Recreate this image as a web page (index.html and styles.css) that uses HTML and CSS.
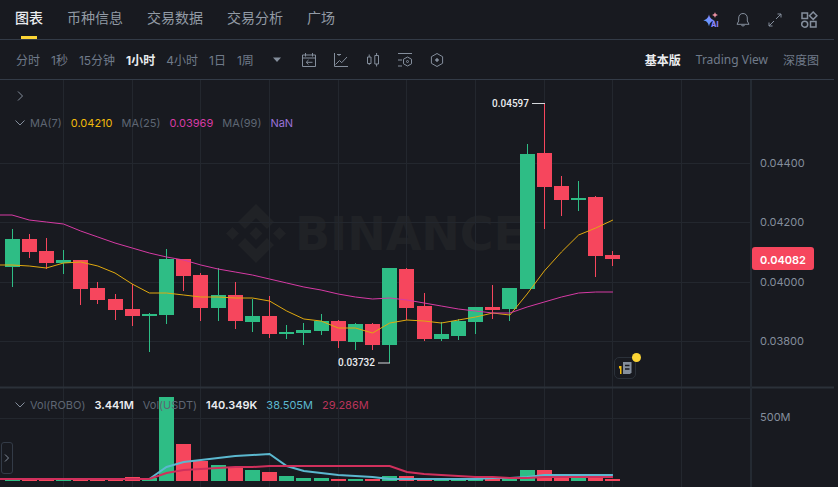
FILE: index.html
```html
<!DOCTYPE html>
<html lang="zh-CN">
<head>
  <meta charset="UTF-8">
  <meta name="viewport" content="width=device-width, initial-scale=1.0">
  <title>ROBO/USDT</title>
  <link rel="stylesheet" href="styles.css">
</head>
<body>
  <header class="tabs-bar">
    <nav class="tabs">
      <a href="#" class="tab active">图表</a>
      <a href="#" class="tab">币种信息</a>
      <a href="#" class="tab">交易数据</a>
      <a href="#" class="tab">交易分析</a>
      <a href="#" class="tab">广场</a>
    </nav>
    <div class="actions">
      <button class="icon-btn" aria-label="AI">
        <svg width="16" height="16" viewBox="0 0 16 16">
          <defs>
            <linearGradient id="spark" x1="0" y1="1" x2="1" y2="0">
              <stop offset="0" stop-color="#4aa8ff"/>
              <stop offset="1" stop-color="#9a7bff"/>
            </linearGradient>
          </defs>
          <path fill="url(#spark)" d="M6 2.500c.9 3.500 2.200 4.800 5.700 5.800C8.200 9.300 6.900 10.600 6 14.200 5.100 10.600 3.800 9.300.3 8.300 3.800 7.300 5.100 6 6 2.500z"/>
          <path fill="#e88fa0" d="M12 0c.5 1.800 1.200 2.500 3 3-1.800.5-2.500 1.200-3 3-.5-1.800-1.200-2.500-3-3 1.800-.5 2.500-1.200 3-3z"/>
          <text class="ai-mark" x="8" y="15">AI</text>
        </svg>
      </button>
      <button class="icon-btn" aria-label="提醒">
        <svg width="16" height="16" viewBox="0 0 16 16" class="line">
          <path d="M8 1.500c-2.700 0-4.300 1.900-4.300 4.500v3L2 12.300h12L12.300 9V6c0-2.600-1.600-4.500-4.300-4.500zM6.300 13c.3 1.300 3.100 1.300 3.400 0"/>
        </svg>
      </button>
      <button class="icon-btn" aria-label="全屏">
        <svg width="16" height="16" viewBox="0 0 16 16" class="line">
          <path d="M10.500 2h3.500v3.500M14 2L9 7M5.500 14H2v-3.500M2 14l5-5"/>
        </svg>
      </button>
      <button class="icon-btn" aria-label="布局">
        <svg width="20" height="18" viewBox="-1 0 20 18" class="line thick">
          <path d="M2 2h5.500v5.500H2zM10.500 10.500H16V16h-5.500zM13.200 1l3.700 3.700-3.700 3.700-3.700-3.700z"/>
          <circle cx="4.700" cy="13.200" r="3"/>
        </svg>
      </button>
    </div>
  </header>

  <div class="toolbar">
    <div class="intervals">
      <button>分时</button>
      <button>1秒</button>
      <button>15分钟</button>
      <button class="active">1小时</button>
      <button>4小时</button>
      <button>1日</button>
      <button>1周</button>
    </div>
    <div class="tools">
      <button class="icon-btn" aria-label="更多周期">
        <svg width="16" height="16" viewBox="0 0 16 16"><path fill="#848e9c" d="M4 5.500h8L8 10z"/></svg>
      </button>
      <button class="icon-btn" aria-label="日期">
        <svg width="16" height="16" viewBox="0 0 16 16" class="line">
          <path d="M1.500 3h13v11.500h-13zM1.500 6h13M4.500 1v3.500M11.500 1v3.500M11.500 10.300h-6M7.500 8l-2.300 2.300 2.300 2.300"/>
        </svg>
      </button>
      <button class="icon-btn" aria-label="走势">
        <svg width="16" height="16" viewBox="0 0 16 16" class="line">
          <path d="M1.500 1v13.500H15M2.500 12.500l4-4 2.200 2.200L14 5M4 2.500h4M6 2.500v1.500"/>
        </svg>
      </button>
      <button class="icon-btn" aria-label="K线样式">
        <svg width="16" height="16" viewBox="0 0 16 16" class="line">
          <path d="M2.500 5h3.500v6.500H2.500zM9.800 3.500h3.700v8.500H9.800zM4.200 2.500V5M4.200 11.500V13M11.600 1v2.500M11.600 12v2.500"/>
        </svg>
      </button>
      <button class="icon-btn" aria-label="指标">
        <svg width="16" height="16" viewBox="0 0 16 16" class="line">
          <path d="M1 1.500h14M1 8h4M1 14h4M10.500 5l4 2.200v4.600l-4 2.200-4-2.200V7.200z"/>
          <circle cx="10.500" cy="9.500" r="1"/>
        </svg>
      </button>
      <button class="icon-btn" aria-label="设置">
        <svg width="16" height="16" viewBox="0 0 16 16" class="line">
          <path d="M8 1.500l5.600 3.200v6.600L8 14.500l-5.600-3.200V4.700z"/>
          <circle cx="8" cy="8" r="1.300" fill="#848e9c"/>
        </svg>
      </button>
    </div>
    <div class="views">
      <button class="active">基本版</button>
      <button>Trading View</button>
      <button>深度图</button>
    </div>
  </div>

  <main class="chart">
    <svg id="chart" class="canvas" viewBox="0 80 838 407">
      <g class="watermark">
        <path d="M256 204l18 18-7 7-11-11-11 11-7-7zM256 263l18-18-7-7-11 11-11-11-7 7zM256 227l6.500 6.500-6.500 6.500-6.500-6.500zM232.500 227l6.500 6.500-6.500 6.500-6.500-6.500zM279.500 227l6.500 6.500-6.500 6.500-6.500-6.500z"/>
        <text x="295" y="250">BINANCE</text>
      </g>
      <g id="grid"></g>
      <g id="volume"></g>
      <g id="candles"></g>
      <g id="averages"></g>
      <path class="frame" d="M0 387.500H834"/>
      <path class="axis" d="M751 80V487"/>
      <path class="marker" d="M532 103.500h13M378 363h12"/>
      <text class="extreme" x="529" y="107">0.04597</text>
      <text class="extreme" x="375" y="366">0.03732</text>
      <g class="ticks">
        <text x="760" y="167">0.04400</text>
        <text x="760" y="226">0.04200</text>
        <text x="760" y="286">0.04000</text>
        <text x="760" y="345">0.03800</text>
        <text x="760" y="421">500M</text>
      </g>
      <rect class="price-tag" x="752" y="247" width="62" height="23" rx="3"/>
      <text class="price" x="760" y="264">0.04082</text>
    </svg>

    <div class="legend legend-price">
      <button class="icon-btn expand" aria-label="展开">
        <svg width="10" height="10" viewBox="0 0 10 10" class="line"><path d="M3 .5L7.500 5 3 9.500"/></svg>
      </button>
      <div class="legend-row">
        <button class="icon-btn" aria-label="收起均线">
          <svg width="10" height="10" viewBox="0 0 10 10" class="line"><path d="M.5 2.500L5 7l4.500-4.500"/></svg>
        </button>
        <span>MA(7)</span><span class="yellow">0.04210</span>
        <span>MA(25)</span><span class="pink">0.03969</span>
        <span>MA(99)</span><span class="purple">NaN</span>
      </div>
    </div>

    <div class="legend legend-volume">
      <div class="legend-row">
        <button class="icon-btn" aria-label="收起成交量">
          <svg width="10" height="10" viewBox="0 0 10 10" class="line"><path d="M.5 2.500L5 7l4.500-4.500"/></svg>
        </button>
        <span>Vol(ROBO)</span><span class="white">3.441M</span>
        <span>Vol(USDT)</span><span class="white">140.349K</span>
        <span class="cyan">38.505M</span><span class="red">29.286M</span>
      </div>
    </div>

    <button class="drawer" aria-label="绘图工具">
      <svg width="10" height="10" viewBox="0 0 10 10" class="line"><path d="M3 1.500L6.500 5 3 8.500"/></svg>
    </button>
    <button class="news" aria-label="资讯">
      <svg width="14" height="14" viewBox="0 0 14 14">
        <path fill="#f0b90b" d="M1 5h2.500v8H2V7.500H1z"/>
        <path fill="#848e9c" d="M5 1h8.500v10.500L12 13H5z"/>
        <path stroke="#181a20" stroke-width="1.500" d="M7 4.500h4.500M7 8h4.500"/>
      </svg>
    </button>
  </main>

  <script src="chart.js"></script>
</body>
</html>
```

FILE: styles.css
```css
body {
  margin: 0;
  background-color: #181a20;
  color: #848e9c;
  font-family: Inter, "Noto Sans CJK SC", sans-serif;
  font-size: 12px;
  overflow-x: hidden;
}

button {
  padding: 0;
  border: none;
  background: none;
  color: inherit;
  font: inherit;
  cursor: pointer;
}

svg {
  display: block;
}

.line {
  fill: none;
  stroke: #848e9c;
  stroke-width: 1;
}

.thick {
  stroke-width: 1.5;
}

.tabs-bar,
.toolbar {
  display: flex;
  align-items: center;
  height: 39px;
  margin-right: 4px;
  border-bottom: 1px solid #333b47;
}

.tabs-bar {
  justify-content: space-between;
}

.tabs {
  display: flex;
  gap: 24px;
  height: 100%;
  padding-left: 15px;
}

.tab {
  display: flex;
  flex-direction: column;
  align-items: center;
  justify-content: space-between;
  color: #929aa5;
  font-size: 14px;
  line-height: 36px;
  text-decoration: none;
}

.tab.active {
  color: #eaecef;
  font-weight: 500;
}

.tab.active::after {
  content: "";
  width: 16px;
  height: 3px;
  background-color: #fcd535;
}

.actions {
  display: flex;
  align-items: center;
  gap: 16px;
  padding-right: 15px;
}

.ai-mark {
  fill: #8b86ff;
  font-size: 7px;
  font-weight: 800;
}

.toolbar {
  color: #707a8a;
}

.toolbar .active {
  color: #eaecef;
  font-weight: 700;
}

.intervals {
  display: flex;
  gap: 11px;
  padding-left: 16px;
}

.tools {
  display: flex;
  gap: 16px;
  margin-left: 15px;
}

.views {
  display: flex;
  gap: 15px;
  margin-left: auto;
  padding-right: 15px;
  font-family: "Noto Sans", "Noto Sans CJK SC", sans-serif;
}

.chart {
  position: relative;
}

.canvas {
  width: 100%;
  height: auto;
}

.watermark {
  fill: #202226;
  font-family: "DejaVu Sans", sans-serif;
  font-size: 46px;
  font-weight: 700;
}

.grid-line {
  stroke: #23272e;
}

.frame {
  stroke: #2b3139;
  stroke-width: 2;
}

.axis {
  stroke: #242a32;
  stroke-width: 2;
}

.up {
  fill: #2ebd85;
  stroke: #2ebd85;
}

.down {
  fill: #f6465d;
  stroke: #f6465d;
}

.body {
  stroke: none;
}

.series {
  fill: none;
  stroke-width: 1;
}

.series.wide {
  stroke-width: 2;
}

.ma7 {
  stroke: #e0a90f;
}

.ma25 {
  stroke: #d63aa4;
}

.vol-fast {
  stroke: #5bb8cf;
}

.vol-slow {
  stroke: #d0305c;
}

.marker {
  stroke: #d5d8dc;
  stroke-width: 1;
}

.extreme {
  fill: #eaecef;
  font-family: Roboto, sans-serif;
  font-size: 10px;
  font-weight: 500;
  text-anchor: end;
}

.ticks {
  fill: #848e9c;
  font-size: 11px;
}

.price-tag {
  fill: #f6465d;
}

.price {
  fill: #fff;
  font-size: 11px;
  font-weight: 600;
}

.legend {
  position: absolute;
  left: 15px;
  color: #5e6673;
  font-size: 11px;
  line-height: 16px;
}

.legend-price {
  top: 2%;
}

.legend-volume {
  top: 78%;
}

.expand {
  display: block;
  height: 16px;
  margin-bottom: 11px;
}

.legend-row {
  display: flex;
  align-items: center;
  gap: 9px;
}

.legend-row .icon-btn {
  margin-right: -4px;
}

.yellow {
  color: #f0b90b;
}

.pink {
  color: #d63aa4;
}

.purple {
  color: #9b72d8;
}

.white {
  color: #eaecef;
  font-weight: 600;
}

.cyan {
  color: #5bb8cf;
}

.red {
  color: #b8345a;
}

.drawer {
  position: absolute;
  left: 1px;
  top: 89%;
  padding: 10px 0;
  border: 1px solid #333b47;
  border-radius: 3px;
}

.news {
  position: absolute;
  left: 73.300%;
  top: 68%;
  padding: 3px;
  border: 1px solid #2b3139;
  border-radius: 5px;
  background-color: #181a20;
}

.news::after {
  content: "";
  position: absolute;
  right: -6px;
  top: -5px;
  width: 9px;
  height: 9px;
  border-radius: 50%;
  background-color: #fcd535;
}
```

FILE: chart.js
```js
const NS = 'http://www.w3.org/2000/svg';
const FIRST = 12;
const STEP = 17.17;
const BASE = 481;

// direction, body top, body bottom, high, low, top of volume bar
const candles = [
  ['up', 239, 267, 229, 287, 479],
  ['down', 239, 252, 234, 258, 480],
  ['down', 251, 263, 238, 269, 479],
  ['up', 260, 263, 250, 274, 480],
  ['down', 260, 289, 260, 305, 480],
  ['down', 288, 300, 282, 304, 480],
  ['down', 299, 310, 294, 320, 480],
  ['down', 309, 316, 284, 326, 477],
  ['up', 314, 316, 313, 352, 478],
  ['up', 259, 315, 249, 324, 397],
  ['down', 259, 276, 259, 291, 444],
  ['down', 275, 308, 273, 321, 461],
  ['up', 295, 308, 268, 321, 465],
  ['down', 295, 321, 282, 329, 468],
  ['up', 316, 322, 299, 332, 470],
  ['down', 316, 334, 296, 338, 472],
  ['up', 332, 334, 325, 339, 476],
  ['up', 330, 333, 323, 345, 478],
  ['up', 321, 331, 314, 335, 478],
  ['down', 321, 341, 320, 348, 479],
  ['up', 324, 342, 323, 350, 479],
  ['down', 324, 345, 323, 350, 479],
  ['up', 268, 345, 268, 363, 476],
  ['down', 269, 308, 268, 320, 476],
  ['down', 306, 339, 293, 341, 478],
  ['up', 334, 339, 322, 341, 478],
  ['up', 321, 336, 319, 340, 479],
  ['up', 307, 322, 307, 334, 478],
  ['down', 307, 310, 285, 319, 478],
  ['up', 288, 309, 288, 321, 478],
  ['up', 154, 289, 144, 289, 470],
  ['down', 153, 187, 103, 229, 470],
  ['down', 186, 200, 176, 216, 476],
  ['up', 198, 200, 181, 211, 477],
  ['down', 197, 256, 196, 277, 476],
  ['down', 255, 259, 251, 266, 479]
];

const averages = {
  'ma7': [265, 266, 268, 263, 262, 266, 273, 284, 293, 293, 295, 297, 297, 298, 298, 301, 311, 319, 321, 328, 328, 333, 323, 320, 321, 323, 320, 317, 313, 315, 294, 271, 252, 235, 228, 220],
  'ma25': [215, 220, 222, 224, 231, 237, 243, 248, 253, 257, 260, 265, 269, 272, 275, 279, 283, 287, 290, 294, 297, 299, 298, 300, 303, 306, 309, 311, 313, 313, 307, 302, 297, 293, 292, 292],
  'vol-fast wide': [479, 479, 479, 479, 479, 479, 479, 479, 479, 467, 462, 460, 458, 456, 455, 454, 466, 471, 473, 475, 476, 477, 479, 479, 479, 479, 479, 479, 478, 478, 477, 475, 475, 475, 475, 475],
  'vol-slow wide': [479, 479, 479, 479, 479, 479, 479, 479, 479, 473, 470, 469, 468, 467, 467, 466, 466, 466, 466, 466, 466, 466, 466, 472, 474, 475, 476, 477, 477, 478, 478, 477, 477, 477, 477, 477]
};

function draw(parent, tag, attrs) {
  const el = document.createElementNS(NS, tag);
  for (const key in attrs) {
    el.setAttribute(key, attrs[key]);
  }
  document.getElementById(parent).appendChild(el);
}

// grid
for (let i = 3; i < 42; i += 4) {
  const x = Math.floor(FIRST + i * STEP) + 0.5;
  draw('grid', 'path', { class: 'grid-line', d: `M${x} 80V487` });
}
[163.5, 222.5, 282.5, 341.5, 418.5].forEach((y) => {
  draw('grid', 'path', { class: 'grid-line', d: `M0 ${y}H750` });
});

// candles and volume bars
candles.forEach(([dir, top, bottom, high, low, vol], i) => {
  const x = Math.floor(FIRST + i * STEP);
  draw('candles', 'path', { class: dir, d: `M${x + 0.5} ${high}V${low}` });
  draw('candles', 'rect', { class: dir + ' body', x: x - 7, y: top, width: 15, height: bottom - top });
  draw('volume', 'rect', { class: dir + ' body', x: x - 7, y: vol, width: 15, height: BASE - vol });
});

// moving averages
for (const name in averages) {
  const values = averages[name];
  const points = values.map((y, i) => `${FIRST + i * STEP},${y}`);
  points.unshift(`0,${values[0]}`);
  draw('averages', 'polyline', { class: 'series ' + name, points: points.join(' ') });
}
```
